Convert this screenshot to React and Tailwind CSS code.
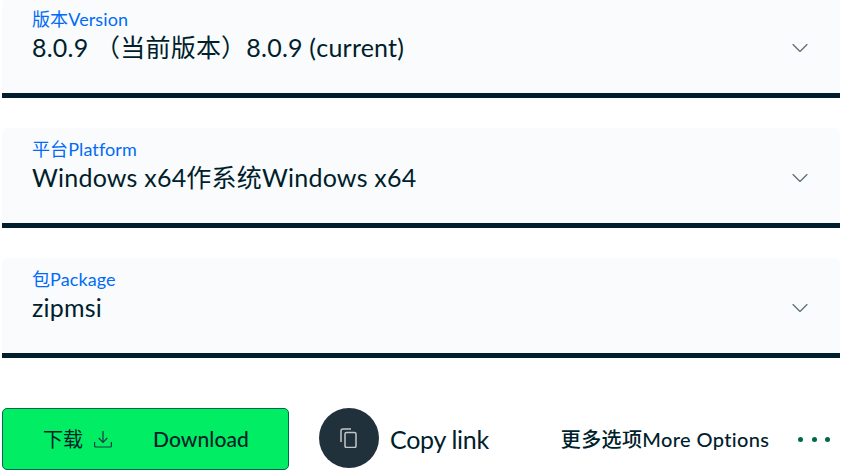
import React from 'react';
import { ChevronDown } from 'lucide-react';

const font = "font-['Lato','Noto_Sans_CJK_SC',sans-serif]";

const fields = [
  { label: '版本Version', value: '8.0.9 （当前版本）8.0.9 (current)' },
  { label: '平台Platform', value: 'Windows x64作系统Windows x64' },
  { label: '包Package', value: 'zipmsi' },
];

const SelectField = ({ label, value }) => (
  <div className="relative flex h-[100px] flex-col rounded-t-md border-b-[5px] border-[#001e2b] bg-[#f9fbfd] pl-[30px] pt-[11px]">
    <div className="h-[20px] text-[18px] leading-[20px] tracking-[0.1px] text-[#016bf8]">{label}</div>
    <div className="mt-[3px] h-[30px] text-[25px] leading-[30px] tracking-[0.22px] text-[#001e2b]">{value}</div>
    <ChevronDown className="absolute right-[26px] top-[36px] h-[28px] w-[28px] text-[#5c6c75]" strokeWidth={1} />
  </div>
);

export default function App() {
  return (
    <div className={`${font} -mt-[2px] h-[475px] w-[850px] overflow-hidden bg-white pl-[2px] pr-[10px]`}>
      <div className="flex flex-col gap-[30px]">
        {fields.map((f) => (
          <SelectField key={f.label} {...f} />
        ))}
      </div>

      <div className="mt-[50px] flex items-start">
        <button className="flex h-[62px] w-[287px] items-center rounded-[5px] border border-[#00684a] bg-[#00ed64] pl-[40px] text-[#001e2b]">
          <span className="text-[20px]">下载</span>
          <svg className="ml-[11px] h-[18px] w-[18px]" viewBox="0 0 18 18" fill="none" stroke="#1c3a3f" strokeWidth="1.2">
            <path d="M9 1v11M4.800 8l4.200 4.300L13.200 8" />
            <path d="M.6 12v4a1 1 0 0 0 1 1h14.800a1 1 0 0 0 1-1v-4" />
          </svg>
          <span className="ml-[41px] text-[21px] font-medium tracking-[0.1px]">Download</span>
        </button>

        <div className="ml-[30px] flex h-[60px] w-[60px] items-center justify-center rounded-full bg-[#21313c]">
          <svg className="h-[20px] w-[20px]" viewBox="0 0 20 20" fill="none" stroke="#c1c7c6" strokeWidth="1.500">
            <rect x="6" y="4.500" width="11" height="15" rx="1.500" />
            <path d="M2 14V3a2 2 0 0 1 2-2h8" />
          </svg>
        </div>
        <span className="ml-[11px] mt-[13px] text-[25px] leading-[36px] tracking-[-0.3px] text-[#001e2b]">Copy link</span>

        <span className="ml-[72px] mt-[16px] text-[20px] font-medium leading-[30px] tracking-[0.37px] text-[#001e2b]">更多选项More Options</span>
        <div className="ml-[29px] mt-[29px] flex gap-[8.500px]">
          <span className="h-[5px] w-[5px] rounded-full bg-[#00684a]" />
          <span className="h-[5px] w-[5px] rounded-full bg-[#00684a]" />
          <span className="h-[5px] w-[5px] rounded-full bg-[#00684a]" />
        </div>
      </div>
    </div>
  );
}
